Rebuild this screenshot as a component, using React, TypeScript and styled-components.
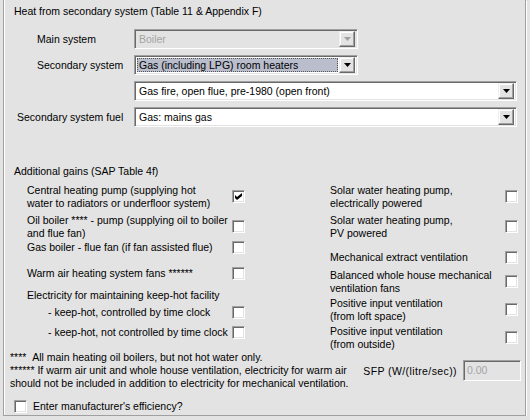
import styled, { createGlobalStyle } from "styled-components";

const GlobalStyle = createGlobalStyle`
  * { box-sizing: border-box; }
  html, body { margin: 0; padding: 0; background: #e3e3e3; }
  body {
    font-family: "Liberation Sans", Arial, sans-serif;
    font-size: 10.5px;
    color: #000;
  }
`;

const Panel = styled.div`
  margin-left: 3px;
  width: 523px;
  height: 416px;
  padding-top: 4px;
  border: 1px solid #a0a0a0;
  border-top: none;
  box-shadow: inset 1px 0 0 #fff, 1px 1px 0 #fff;
`;

const Title = styled.div`
  padding-left: 10px;
  line-height: 14px;
  white-space: nowrap;
`;

const FieldGrid = styled.div`
  display: grid;
  grid-template-columns: 130px auto;
  row-gap: 6px;
  margin-top: 11px;
  align-items: center;
`;

const FieldLabel = styled.div<{ $indent: number }>`
  padding-left: ${(p) => p.$indent}px;
  white-space: nowrap;
`;

const Combo = styled.div<{ $width: number; $disabled?: boolean }>`
  width: ${(p) => p.$width}px;
  height: 20px;
  display: flex;
  align-items: center;
  padding: 2px;
  background: ${(p) => (p.$disabled ? "#e3e3e3" : "#fff")};
  border: 1px solid;
  border-color: #a0a0a0 #fff #fff #a0a0a0;
  box-shadow: inset 1px 1px 0 #696969, inset -1px -1px 0 #e3e3e3;
`;

const ComboText = styled.div<{ $disabled?: boolean; $selected?: boolean }>`
  flex: 1;
  height: 100%;
  display: flex;
  align-items: center;
  margin-right: 1px;
  padding-left: 2px;
  white-space: nowrap;
  overflow: hidden;
  color: ${(p) => (p.$disabled ? "#a3a3a3" : "#000")};
  background: ${(p) => (p.$selected ? "#b9bdcc" : "transparent")};
  outline: ${(p) => (p.$selected ? "1px dotted #555" : "none")};
  outline-offset: -1px;
`;

const ComboButton = styled.div`
  width: 16px;
  height: 16px;
  display: flex;
  align-items: center;
  justify-content: center;
  background: #e3e3e3;
  border: 1px solid;
  border-color: #f0f0f0 #696969 #696969 #f0f0f0;
  box-shadow: inset -1px -1px 0 #a0a0a0, inset 1px 1px 0 #fff;
`;

const GainsTitle = styled.div`
  margin-top: 38px;
  padding-left: 10px;
  line-height: 13px;
`;

const GainsGrid = styled.div`
  display: grid;
  grid-template-columns: 219px 189px;
  column-gap: 84px;
  align-items: start;
  padding-left: 23px;
`;

const Column = styled.div`
  display: flex;
  flex-direction: column;
`;

const Item = styled.div<{ $top: number; $textWidth: number }>`
  display: grid;
  grid-template-columns: ${(p) => p.$textWidth}px 13px;
  align-items: center;
  margin-top: ${(p) => p.$top}px;
`;

const ItemText = styled.div<{ $indent?: number }>`
  line-height: 12.5px;
  white-space: nowrap;
  padding-left: ${(p) => p.$indent ?? 0}px;
`;

const Box = styled.span`
  width: 13px;
  height: 13px;
  display: inline-flex;
  align-items: center;
  justify-content: center;
  background: #fff;
  border: 1px solid;
  border-color: #a0a0a0 #fff #fff #a0a0a0;
  box-shadow: inset 1px 1px 0 #696969, inset -1px -1px 0 #e3e3e3;
`;

const Notes = styled.div`
  display: flex;
  align-items: center;
  margin-top: 1px;
  padding-left: 6px;
  padding-right: 4px;
`;

const NoteText = styled.div`
  line-height: 13px;
  white-space: nowrap;
`;

const SfpGroup = styled.div`
  margin-left: auto;
  display: flex;
  align-items: center;
  gap: 6px;
  white-space: nowrap;
`;

const SfpLabel = styled.span`
  letter-spacing: 0.4px;
`;

const DisabledInput = styled.div`
  width: 58px;
  height: 21px;
  padding: 3px 3px;
  color: #a3a3a3;
  background: #e3e3e3;
  border: 1px solid;
  border-color: #a0a0a0 #fff #fff #a0a0a0;
  box-shadow: inset 1px 1px 0 #696969, inset -1px -1px 0 #e3e3e3;
`;

const CheckRow = styled.label`
  display: flex;
  align-items: center;
  gap: 6px;
  margin-top: 10px;
  padding-left: 10px;
  line-height: 13px;
`;

function Arrow({ disabled }: { disabled?: boolean }) {
  return (
    <svg width="7" height="4" viewBox="0 0 7 4">
      <path d="M0 0h7L3.5 4z" fill={disabled ? "#a0a0a0" : "#000"} />
    </svg>
  );
}

function Check({ checked }: { checked?: boolean }) {
  return (
    <Box>
      {checked && (
        <svg width="7" height="7" viewBox="0 0 7 7">
          <path d="M0 2l2 2 5-4v3l-5 4-2-2z" fill="#000" />
        </svg>
      )}
    </Box>
  );
}

interface IGain {
  lines: string[];
  top: number;
  checked?: boolean;
  indent?: number;
  noBox?: boolean;
}

const leftGains: IGain[] = [
  {
    lines: [
      "Central heating pump (supplying hot",
      "water to radiators or underfloor system)",
    ],
    top: 6,
    checked: true,
  },
  {
    lines: ["Oil boiler **** - pump (supplying oil to boiler", "and flue fan)"],
    top: 5,
  },
  { lines: ["Gas boiler - flue fan (if fan assisted flue)"], top: 2 },
  { lines: ["Warm air heating system fans ******"], top: 13 },
  { lines: ["Electricity for maintaining keep-hot facility"], top: 9, noBox: true },
  { lines: ["- keep-hot, controlled by time clock"], top: 4, indent: 21 },
  { lines: ["- keep-hot, not controlled by time clock"], top: 7, indent: 21 },
];

const rightGains: IGain[] = [
  { lines: ["Solar water heating pump,", "electrically powered"], top: 6 },
  { lines: ["Solar water heating pump,", "PV powered"], top: 5 },
  { lines: ["Mechanical extract ventilation"], top: 12 },
  { lines: ["Balanced whole house mechanical", "ventilation fans"], top: 5 },
  { lines: ["Positive input ventilation", "(from loft space)"], top: 3 },
  { lines: ["Positive input ventilation", "(from outside)"], top: 3 },
];

function GainList({ items, textWidth }: { items: IGain[]; textWidth: number }) {
  return (
    <Column>
      {items.map((g) => (
        <Item key={g.lines[0] + g.top} $top={g.top} $textWidth={textWidth}>
          <ItemText $indent={g.indent}>
            {g.lines.map((l, i) => (
              <div key={i}>{l}</div>
            ))}
          </ItemText>
          {!g.noBox && <Check checked={g.checked} />}
        </Item>
      ))}
    </Column>
  );
}

function App() {
  return (
    <>
      <GlobalStyle />
      <Panel>
        <Title>Heat from secondary system (Table 11 &amp; Appendix F)</Title>
        <FieldGrid>
          <FieldLabel $indent={33}>Main system</FieldLabel>
          <Combo $width={224} $disabled>
            <ComboText $disabled>Boiler</ComboText>
            <ComboButton>
              <Arrow disabled />
            </ComboButton>
          </Combo>

          <FieldLabel $indent={33}>Secondary system</FieldLabel>
          <Combo $width={224}>
            <ComboText $selected>Gas (including LPG) room heaters</ComboText>
            <ComboButton>
              <Arrow />
            </ComboButton>
          </Combo>

          <FieldLabel $indent={33} />
          <Combo $width={383}>
            <ComboText>Gas fire, open flue, pre-1980 (open front)</ComboText>
            <ComboButton>
              <Arrow />
            </ComboButton>
          </Combo>

          <FieldLabel $indent={13}>Secondary system fuel</FieldLabel>
          <Combo $width={383}>
            <ComboText>Gas: mains gas</ComboText>
            <ComboButton>
              <Arrow />
            </ComboButton>
          </Combo>
        </FieldGrid>

        <GainsTitle>Additional gains (SAP Table 4f)</GainsTitle>
        <GainsGrid>
          <GainList items={leftGains} textWidth={205} />
          <GainList items={rightGains} textWidth={175} />
        </GainsGrid>

        <Notes>
          <NoteText>
            <div>**** &nbsp;All main heating oil boilers, but not hot water only.</div>
            <div>
              ****** If warm air unit and whole house ventilation, electricity for warm air
            </div>
            <div>should not be included in addition to electricity for mechanical ventilation.</div>
          </NoteText>
          <SfpGroup>
            <SfpLabel>SFP (W/(litre/sec))</SfpLabel>
            <DisabledInput>0.00</DisabledInput>
          </SfpGroup>
        </Notes>

        <CheckRow>
          <Check />
          <span>Enter manufacturer's efficiency?</span>
        </CheckRow>
      </Panel>
    </>
  );
}

export default App;
